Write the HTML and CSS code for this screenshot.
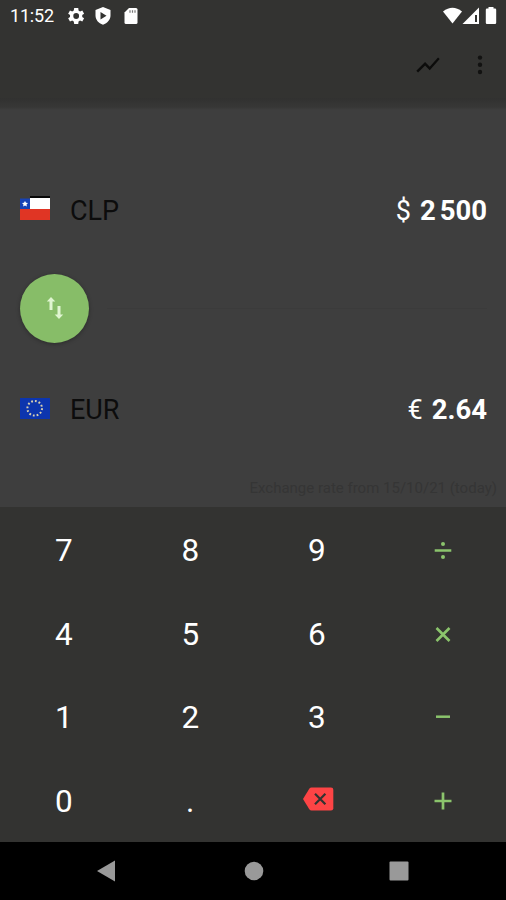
FILE: index.html
```html
<!DOCTYPE html>
<html lang="en">
<head>
<meta charset="utf-8">
<title>Currency converter</title>
<link rel="stylesheet" href="styles.css">
</head>
<body>
<div class="screen">
  <header class="header">
    <div class="status">
      <span class="time">11:52</span>
      <svg class="st-gear" width="18" height="18" viewBox="2.500 2 20 20"><path fill="#fff" fill-rule="evenodd" d="M19.400 13a7.500 7.500 0 0 0 0-2l2.100-1.600-2-3.500-2.500 1a7.500 7.500 0 0 0-1.700-1L15 3.200h-4.500L10 5.900a7.500 7.500 0 0 0-1.700 1l-2.500-1-2 3.500L5.900 11a7.500 7.500 0 0 0 0 2l-2.100 1.600 2 3.500 2.500-1a7.500 7.500 0 0 0 1.700 1l.5 2.700H15l.3-2.700a7.500 7.500 0 0 0 1.700-1l2.500 1 2-3.500zM12.700 15.200a3.200 3.200 0 1 1 0-6.400 3.200 3.200 0 0 1 0 6.400z"/></svg>
      <svg class="st-shield" width="18" height="20" viewBox="0 0 18 20"><path fill="#fff" fill-rule="evenodd" d="M9 1 16.500 4v5.500c0 4.200-3 7.700-7.500 9.300-4.500-1.600-7.500-5.100-7.500-9.300V4zM6.500 6v7.400l6-3.700z"/></svg>
      <svg class="st-sd" width="14" height="18" viewBox="0 0 14 18"><path fill="#fff" d="M5 1h7q1.500 0 1.500 1.500v13Q13.500 17 12 17H2Q.5 17 .5 15.500v-10z"/><path stroke="#777" stroke-width="1.200" d="M6 3.200v2.500M8.500 3.200v2.500M11 3.200v2.500"/></svg>
      <svg class="st-right" width="58" height="20" viewBox="0 0 58 20"><path fill="#fff" d="M1 5.500Q10.500-2 20 5.500L10.500 17.500z"/><path fill="#fff" fill-rule="evenodd" d="M37 1.500V18H20.500zM33 9v7h2V9z"/><path fill="#fff" d="M46.500 2.500V1h5v1.500H53q1.200 0 1.200 1.200v13q0 1.300-1.200 1.300h-8q-1.200 0-1.200-1.300v-13q0-1.200 1.200-1.200z"/></svg>
    </div>
    <div class="toolbar">
      <svg class="chart" width="28" height="28" viewBox="0 0 24 24"><path fill="#0c0c0b" d="m3.500 18.490 6-6.010 4 4L22 6.920l-1.410-1.410-7.090 7.970-4-4L2 16.990z"/></svg>
      <svg width="8" height="22" viewBox="0 0 8 22"><g fill="#121211"><circle cx="4" cy="3.600" r="2.200"/><circle cx="4" cy="10.700" r="2.200"/><circle cx="4" cy="18" r="2.200"/></g></svg>
    </div>
  </header>
  <main class="panel">
    <div class="row">
      <svg class="flag" width="30" height="24" viewBox="0 0 30 24"><path fill="#080808" d="M10 0h20v2H10z"/><path fill="#fff" d="M10 2h20v11H10z"/><path fill="#e03524" d="M0 13h30v11H0z"/><path fill="#1742b5" d="M0 2.500h10V13H0z"/><path fill="#fff" d="m5 5 1 1.700 2 .3-1.500 1.400.4 2-1.900-.9-1.900.9.400-2L2 7l2-.3z"/></svg>
      <span class="code">CLP</span>
      <span class="amount"><span class="symbol">$</span><b>2<i></i>500</b></span>
    </div>
    <div class="swap-row">
      <div class="swap"><svg width="18" height="24" viewBox="0 0 18 24"><path fill="#dff5d0" d="M5 1 9.300 5.500H6.500V14h-3V5.500H.8zM13 23 8.700 18.500h2.800V10h3v8.500h2.700z"/></svg></div>
      <div class="divider"></div>
    </div>
    <div class="row">
      <svg class="flag-eu" width="30" height="21" viewBox="0 0 30 21"><path fill="#0c35ae" d="M0 0h30v21H0z"/><circle cx="14.700" cy="10.300" r="7.300" fill="none" stroke="#d9d0b0" stroke-width="2" stroke-dasharray="1.800 2.022"/></svg>
      <span class="code">EUR</span>
      <span class="amount"><span class="symbol">€</span><b>2.64</b></span>
    </div>
    <div class="note">Exchange rate from 15/10/21 (today)</div>
  </main>
  <section class="keypad">
    <span>7</span><span>8</span><span>9</span>
    <span class="op"><svg width="20" height="20" viewBox="0 0 20 20"><path stroke="#8bc46c" stroke-width="2.500" d="M1.700 10.500h16.600"/><circle cx="10" cy="4" r="2" fill="#8bc46c"/><circle cx="10" cy="17" r="2" fill="#8bc46c"/></svg></span>
    <span>4</span><span>5</span><span>6</span>
    <span class="op"><svg width="20" height="20" viewBox="0 0 20 20"><path stroke="#8bc46c" stroke-width="2.600" d="m3.500 4 13 13M16.500 4l-13 13"/></svg></span>
    <span>1</span><span>2</span><span>3</span>
    <span class="op"><svg width="20" height="20" viewBox="0 0 20 20"><path stroke="#8bc46c" stroke-width="2.500" d="M3 9.700h14"/></svg></span>
    <span>0</span><span>.</span>
    <span><svg class="erase" width="32" height="24" viewBox="0 0 32 24"><path fill="#fd4445" d="M9.500.5H29q2.300 0 2.300 2.300v18.400q0 2.300-2.300 2.300H9.500q-1.300 0-2.200-1.200L1 12l6.300-10.300Q8.200.5 9.500.5z"/><path stroke="#333331" stroke-width="2.200" d="m13 6.700 10.400 10.600M23.400 6.700 13 17.300"/></svg></span>
    <span class="op"><svg width="20" height="20" viewBox="0 0 20 20"><path stroke="#8bc46c" stroke-width="2.700" d="M1.500 10h17M10 1.500v17"/></svg></span>
  </section>
  <nav class="nav">
    <svg width="18" height="22" viewBox="0 0 18 22"><path fill="#999" d="M18 .5v21L0 11z"/></svg>
    <svg class="home" width="20" height="20" viewBox="0 0 20 20"><circle cx="10" cy="10" r="9.300" fill="#999"/></svg>
    <svg width="20" height="20" viewBox="0 0 20 20"><rect x=".5" y=".5" width="19" height="19" rx="1" fill="#999"/></svg>
  </nav>
</div>
</body>
</html>
```
FILE: styles.css
```css
* { box-sizing: border-box; }
body { margin: 0; background: #000; font-family: Roboto, "Liberation Sans", sans-serif; }
svg { display: block; flex: none; }
.screen { width: 506px; height: 900px; display: flex; flex-direction: column; overflow: hidden; }
.header { height: 98px; background: #333331; z-index: 1; }
.status { height: 32px; display: flex; align-items: center; padding: 0 6px 0 10px; }
.time { width: 57px; font-size: 18px; line-height: 32px; color: #fff; letter-spacing: -.2px; }
.st-shield { margin-left: 9px; }
.st-sd { margin-left: 12px; }
.st-right { margin-left: auto; }
.toolbar { height: 66px; display: flex; align-items: center; justify-content: flex-end; gap: 34px; padding: 0 22px 0 0; }
.panel { height: 409px; background: linear-gradient(#313130, #373736 9px, #3e3e3e 12px); padding: 80px 19px 0 20px; display: flex; flex-direction: column; }
.row { height: 64px; display: flex; align-items: center; }
.flag { margin-top: -4px; }
.flag-eu { margin-top: -2px; }
.code { margin: 1px 0 0 20px; font-size: 27px; color: #0c0c0c; }
.amount { margin-left: auto; display: flex; align-items: center; gap: 9px; font-size: 27.500px; color: #fff; }
.symbol { font-size: 27px; padding-top: 1px; }
.amount i { display: inline-block; width: 4px; }
.swap-row { display: flex; align-items: center; height: 70px; margin: 31px 0 34px; }
.swap { width: 69px; height: 69px; border-radius: 50%; background: #87bd68; display: flex; align-items: center; justify-content: center; box-shadow: 0 1px 4px rgba(0, 0, 0, .3); }
.divider { flex: 1; height: 1px; margin-left: 18px; background: #3b3b3b; }
.note { margin: 38px -10px 0 0; font-size: 15px; line-height: 18px; text-align: right; color: #353535; white-space: nowrap; }
.keypad { height: 335px; background: #333331; display: grid; grid-template: repeat(4, 1fr) / repeat(4, 1fr); }
.keypad span { display: flex; align-items: center; justify-content: center; font-size: 31.500px; color: #fff; padding: 3px 0 0 1px; }
.keypad .op { padding-top: 2px; }
.erase { margin: -5px 0 0 2px; }
.nav { height: 58px; background: #000; display: flex; align-items: center; justify-content: space-between; padding: 0 97px; }
.home { margin-left: 3px; }
```
